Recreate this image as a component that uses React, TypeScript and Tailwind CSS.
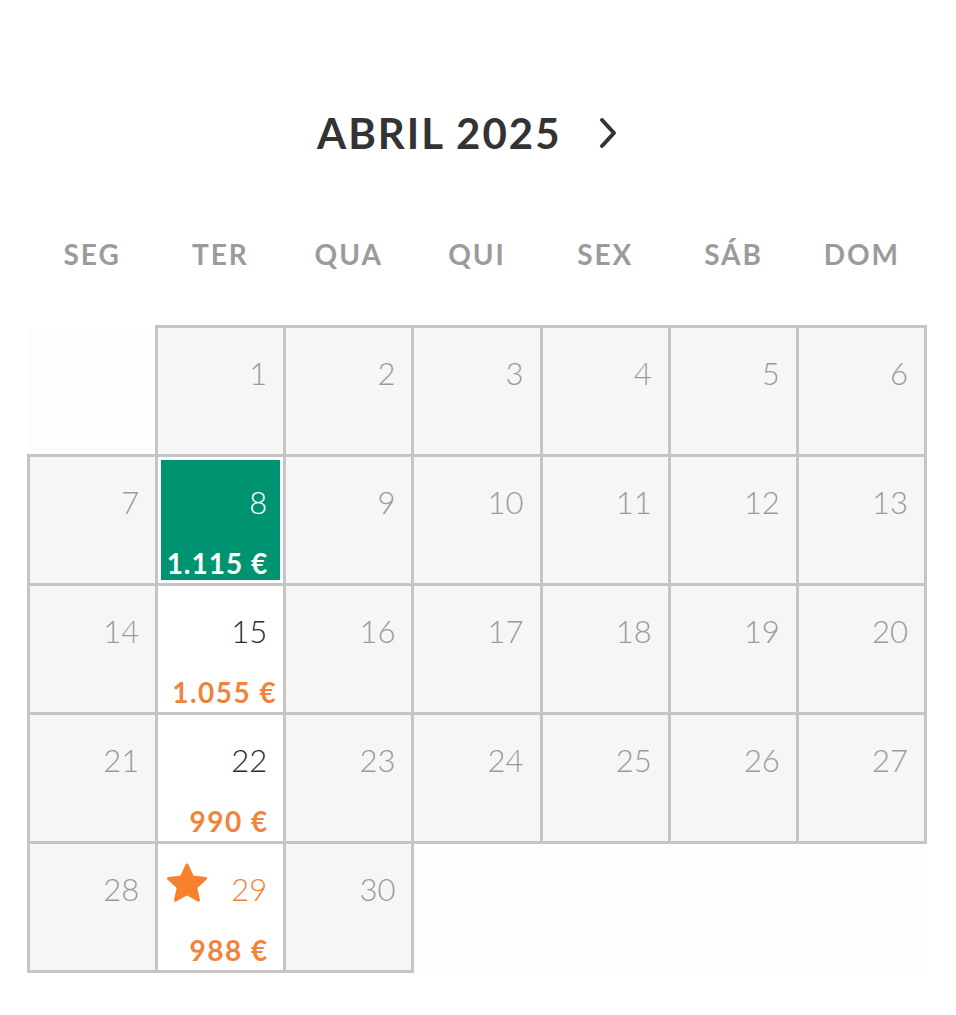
import React from "react";

type Day = {
  d: number;
  price?: string;
  kind?: "selected" | "offer" | "star";
};

const days: Day[] = Array.from({ length: 30 }, (_, i) => ({ d: i + 1 }));
days[7] = { d: 8, price: "1.115 €", kind: "selected" };
days[14] = { d: 15, price: "1.055 €", kind: "offer" };
days[21] = { d: 22, price: "990 €", kind: "offer" };
days[28] = { d: 29, price: "988 €", kind: "star" };

const headers = ["SEG", "TER", "QUA", "QUI", "SEX", "SÁB", "DOM"];

function Star() {
  return (
    <svg width="44" height="42" viewBox="0 0 24 23" className="shrink-0">
      <path
        d="M12 1.6l3 6.6 7.2.8-5.4 4.9 1.5 7.1L12 17.4l-6.3 3.6 1.5-7.1L1.8 9l7.2-.8z"
        fill="#f8812e"
        stroke="#f8812e"
        strokeWidth="1.6"
        strokeLinejoin="round"
      />
    </svg>
  );
}

function Cell({ day }: { day: Day }) {
  const base = "-ml-[3px] -mt-[3px] border-[3px] border-[#c5c5c5]";
  if (day.kind === "selected") {
    return (
      <div className={`${base} bg-white p-[3px]`}>
        <div className="h-full bg-[#009371] flex flex-col items-end pt-[22px] pr-[13px] pl-[9px]">
          <div className="text-[31px] leading-[40px] font-light text-white">{day.d}</div>
          <div className="mt-[24px] text-[28px] leading-[34px] font-bold tracking-[1px] -mr-[1px] text-white whitespace-nowrap">
            {day.price}
          </div>
        </div>
      </div>
    );
  }
  if (day.kind === "offer" || day.kind === "star") {
    return (
      <div className={`${base} bg-white flex flex-col pt-[25px] pr-[16px] pl-[14px]`}>
        <div className="relative flex items-center justify-end">
          {day.kind === "star" && (
            <div className="absolute -left-[7px] -top-[7px]">
              <Star />
            </div>
          )}
          <div className={`text-[31px] leading-[40px] font-light ${day.kind === "star" ? "text-[#f0813a]" : "text-[#2b2b2b]"}`}>
            {day.d}
          </div>
        </div>
        <div className="mt-[24px] text-[28px] leading-[34px] font-bold tracking-[1.5px] text-[#f0843c] whitespace-nowrap text-right -mr-[1.5px]">
          {day.price}
        </div>
      </div>
    );
  }
  return (
    <div className={`${base} bg-[#f6f6f6] flex justify-end pt-[25px] pr-[16px]`}>
      <div className="text-[31px] leading-[40px] font-light text-[#9a9a9a]">{day.d}</div>
    </div>
  );
}

export default function App() {
  return (
    <div
      className="w-[956px] h-[1015px] bg-white"
      style={{ fontFamily: "Lato, 'Noto Sans', sans-serif" }}
    >
      <div className="pt-[107px] pl-[317px] flex items-center">
        <h1 className="text-[42px] leading-[52px] font-bold text-[#333333] tracking-[2px]">ABRIL 2025</h1>
        <svg width="22" height="34" viewBox="0 0 22 34" className="ml-[35px]">
          <path d="M5 4l12 13L5 30" fill="none" stroke="#333333" strokeWidth="4" strokeLinecap="round" strokeLinejoin="round" />
        </svg>
      </div>
      <div className="mt-[77px] ml-[28px] w-[898px] grid grid-cols-7">
        {headers.map((h) => (
          <div key={h} className="text-center text-[28px] leading-[36px] font-bold tracking-[2px] text-[#9b9b9b]">
            {h}
          </div>
        ))}
      </div>
      <div className="mt-[56px] ml-[30px] w-[897px] grid grid-cols-7 auto-rows-[129px] bg-[#fdfdfd]">
        <div className="-mt-[3px] -ml-[3px]" />
        {days.map((d) => (
          <Cell key={d.d} day={d} />
        ))}
      </div>
    </div>
  );
}
